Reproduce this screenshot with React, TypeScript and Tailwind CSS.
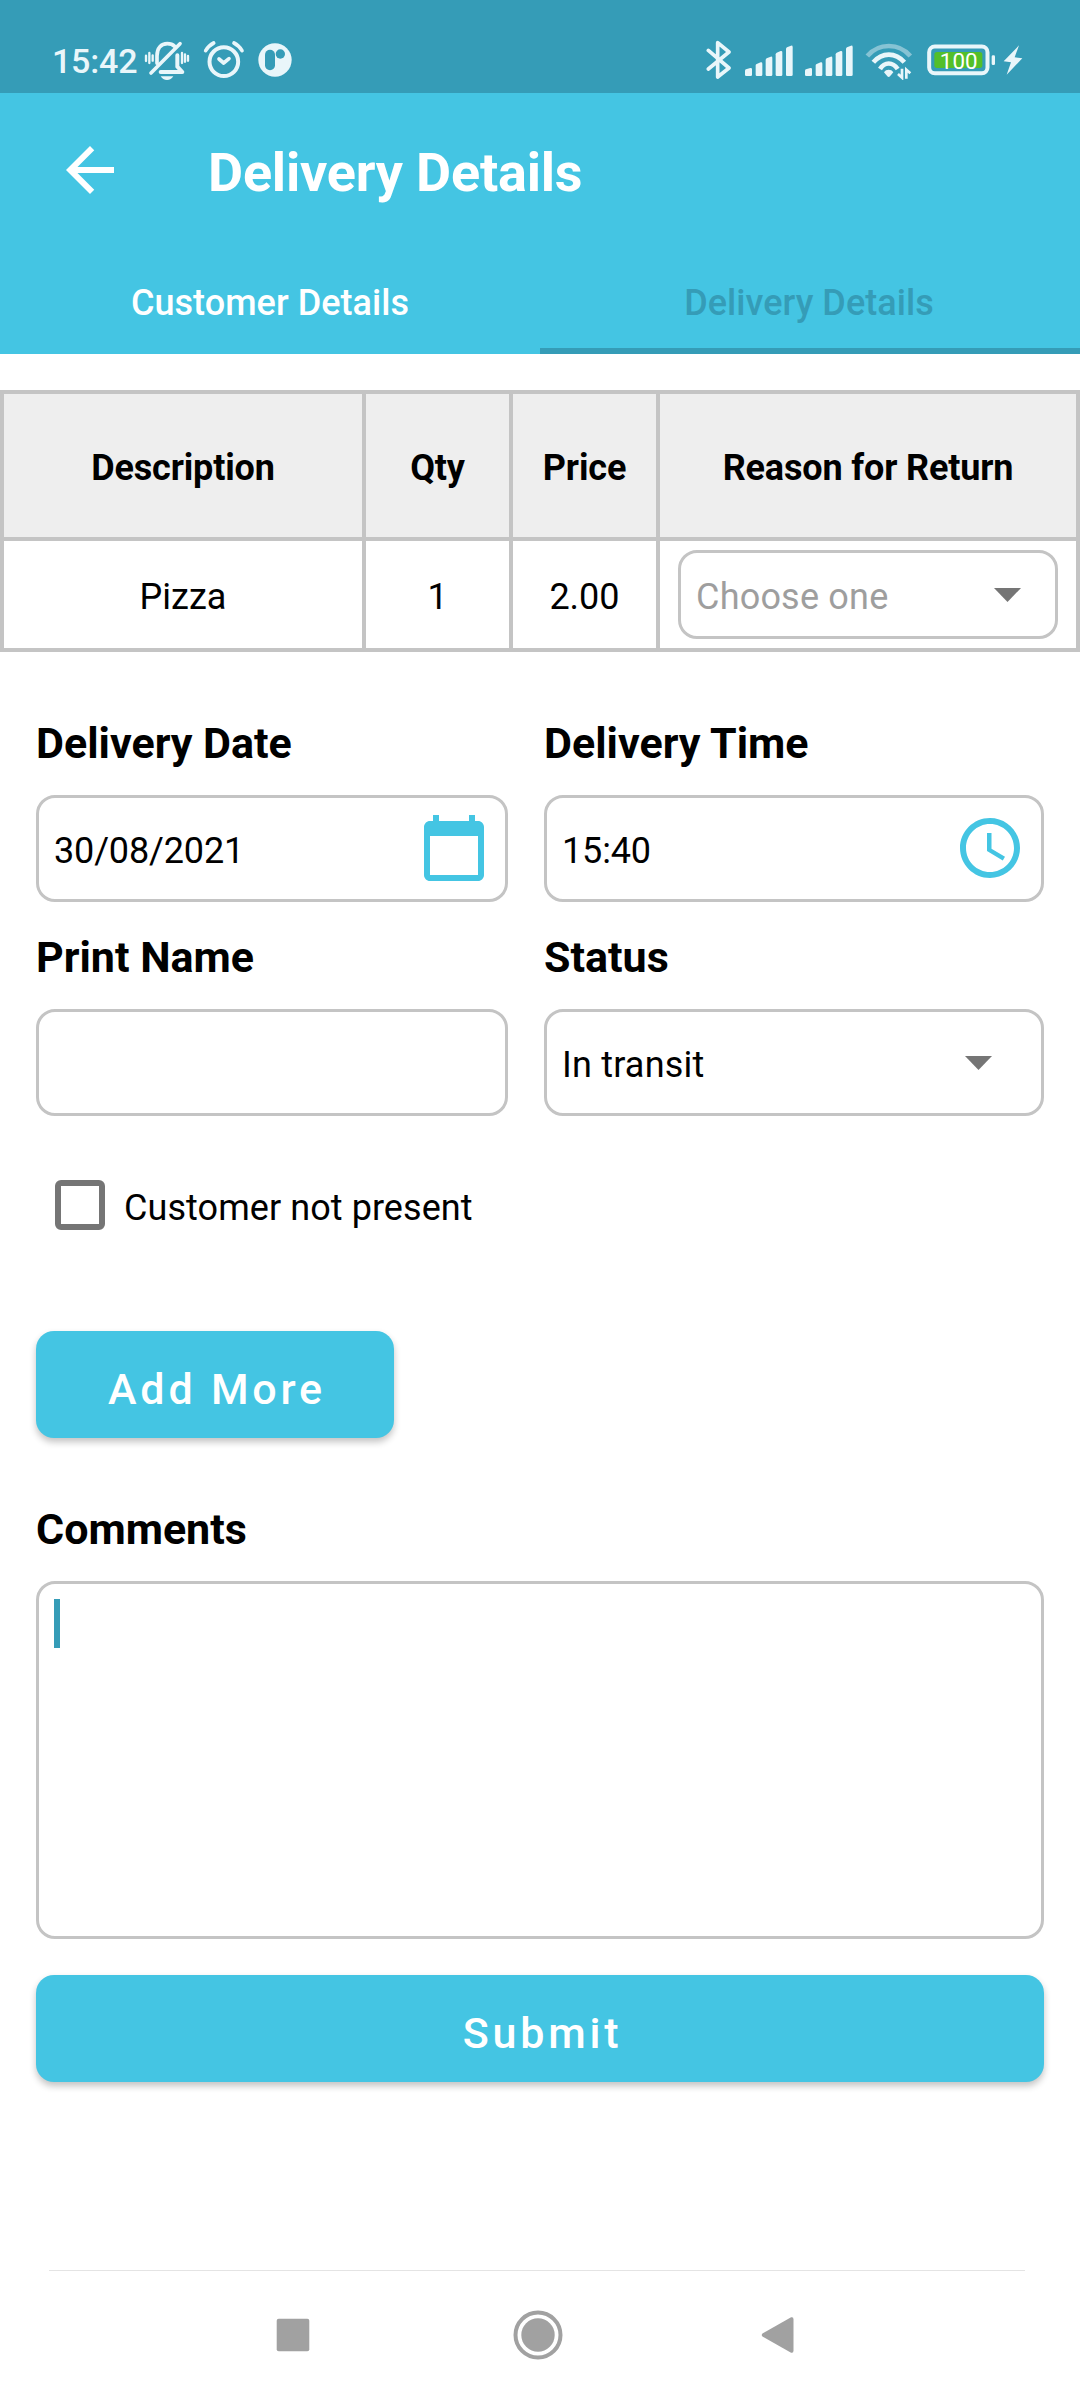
import { useState } from "react";

const tabs = ["Customer Details", "Delivery Details"];

const items = [{ description: "Pizza", qty: "1", price: "2.00" }];

const MutedBellIcon = () => (
  <svg className="w-[46px] h-[40px]" viewBox="432 120 138 120" fill="none" stroke="#e9f6fa" strokeLinecap="round">
    <path d="M471 190V168C471 143 484 131 502 131C512 131 519 134 524 139" strokeWidth="11" />
    <path d="M453 219L540 131" strokeWidth="11" />
    <path d="M482 216H547L532 200V166" strokeWidth="12" strokeLinejoin="round" />
    <path d="M438 167V183M448 159V189M458 166V182M546 159V189M555 163V185M564 168V182" strokeWidth="7" />
    <path d="M482 229H520C516 236 509 240 501 240C493 240 486 236 482 229Z" fill="#e9f6fa" stroke="none" />
  </svg>
);

const AlarmIcon = () => (
  <svg className="w-[42px] h-[40px]" viewBox="608 120 126 120" fill="none" stroke="#e9f6fa" strokeLinecap="round">
    <circle cx="670.5" cy="185" r="43" strokeWidth="12" />
    <path d="M616 152C622 142 630 134 640 129M725 152C719 142 711 134 701 129" strokeWidth="11" />
    <path d="M656 177L670 189L686 176" strokeWidth="11" strokeLinejoin="round" />
  </svg>
);

const AppIcon = () => (
  <svg className="w-[36px] h-[36px]" viewBox="771 126 108 108">
    <circle cx="825" cy="180" r="50" fill="#e9f6fa" />
    <rect x="795" y="149" width="30" height="62" rx="15" fill="#359cb7" />
    <circle cx="841" cy="162" r="14" fill="#359cb7" />
  </svg>
);

const BluetoothIcon = () => (
  <svg className="w-[26px] h-[40px]" viewBox="79 120 78 120" fill="none" stroke="#e9f6fa" strokeWidth="11" strokeLinecap="round" strokeLinejoin="round">
    <path d="M86 151L148 204L114 231V128L148 156L86 207" />
  </svg>
);

const SignalIcon = () => (
  <svg className="w-[50px] h-[32px]" viewBox="193 135 150 96" fill="#e9f6fa">
    <path d="M196 224V212Q196 209 199 208L212 204Q217 203 217 208V224Q217 228 213 228H200Q196 228 196 224Z" />
    <path d="M228 224V196Q228 193 231 192L243 187Q248 186 248 191V224Q248 228 244 228H232Q228 228 228 224Z" />
    <path d="M258 224V180Q258 177 261 175L273 170Q278 169 278 174V224Q278 228 274 228H262Q258 228 258 224Z" />
    <path d="M288 224V163Q288 160 291 158L303 153Q308 152 308 157V224Q308 228 304 228H292Q288 228 288 224Z" />
    <path d="M319 224V147Q319 144 322 142L334 137Q339 136 339 141V224Q339 228 335 228H323Q319 228 319 224Z" />
  </svg>
);

const WifiIcon = () => (
  <svg className="w-[48px] h-[38px]" viewBox="555 126 144 114" fill="none" stroke="#e9f6fa" strokeWidth="14">
    <path d="M562 168C596 128 657 128 691 168" stroke="#86c3d4" />
    <path d="M580 187C606 156 647 156 673 187" />
    <path d="M600 207C614 185 638 185 653 207" />
    <path d="M612 217C618 207 634 207 640 217L630 229Q626 233 622 229Z" fill="#e9f6fa" stroke="none" />
    <path d="M666 206V233L654 222M679 236V209L691 220" strokeWidth="8" />
  </svg>
);

const BatteryIcon = () => (
  <svg className="w-[70px] h-[32px]" viewBox="740 132 210 96">
    <rect x="746.5" y="139.5" width="175" height="80" rx="17" fill="none" stroke="#e9f6fa" strokeWidth="12" />
    <rect x="762" y="156" width="144" height="48" rx="8" fill="#53bf2a" />
    <rect x="934" y="166" width="10" height="29" rx="4" fill="#e9f6fa" />
    <text x="835" y="207" textAnchor="middle" fontSize="67" fill="#ffffff">
      100
    </text>
  </svg>
);

const BoltIcon = () => (
  <svg className="w-[20px] h-[32px]" viewBox="968 134 60 96" fill="#e9f6fa">
    <path d="M1016 138L970 186L992 189L979 226L1026 177L1003 174Z" />
  </svg>
);

const CalendarIcon = () => (
  <svg className="mb-0.5 size-[72px]" viewBox="0 0 24 24" fill="#44c5e3">
    <path d="M20 3h-1V1h-2v2H7V1H5v2H4c-1.1 0-2 .9-2 2v16c0 1.1.9 2 2 2h16c1.1 0 2-.9 2-2V5c0-1.1-.9-2-2-2zm0 18H4V8h16v13z" />
  </svg>
);

const ClockIcon = () => (
  <svg className="mb-0.5 size-[72px]" viewBox="0 0 24 24" fill="#44c5e3">
    <path d="M11.99 2C6.47 2 2 6.48 2 12s4.47 10 9.99 10C17.52 22 22 17.52 22 12S17.52 2 11.99 2zM12 20c-4.42 0-8-3.58-8-8s3.58-8 8-8 8 3.58 8 8-3.58 8-8 8z" />
    <path d="M12.5 7H11v6l5.25 3.15.75-1.23-4.5-2.67z" />
  </svg>
);

const DropdownArrow = () => (
  <svg className="w-[27px] h-[14px]" viewBox="0 0 27 14" fill="#757575">
    <path d="M0 0H27L13.5 14Z" />
  </svg>
);

function StatusBar() {
  return (
    <div className="flex h-[93px] items-center bg-[#359cb7] pl-[52px] pr-[57px] pt-[27px] text-[#e9f6fa]">
      <p className="w-[92px] pt-0.5 text-[34px] font-medium leading-none tracking-[-0.2px]">15:42</p>
      <MutedBellIcon />
      <div className="ml-[13px]">
        <AlarmIcon />
      </div>
      <div className="ml-[12px]">
        <AppIcon />
      </div>
      <div className="ml-auto flex items-center">
        <BluetoothIcon />
        <div className="ml-[12px] mt-[2px] flex gap-[10px]">
          <SignalIcon />
          <SignalIcon />
        </div>
        <div className="ml-[11px] mt-[2px]">
          <WifiIcon />
        </div>
        <div className="ml-[14px]">
          <BatteryIcon />
        </div>
        <div className="ml-[6px]">
          <BoltIcon />
        </div>
      </div>
    </div>
  );
}

export default function App() {
  const [currentTab, setCurrentTab] = useState(1);
  const [notPresent, setNotPresent] = useState(false);
  const [printName, setPrintName] = useState("");

  return (
    <div className="flex h-[2400px] w-[1080px] flex-col bg-white font-[Roboto,sans-serif] text-black">
      <StatusBar />
      <header className="bg-[#44c5e3] text-white">
        <div className="flex h-[158px] items-center pl-[54px]">
          <svg className="mb-1 size-[72px]" viewBox="0 0 24 24" fill="currentColor">
            <path d="M20 11H7.83l5.59-5.59L12 4l-8 8 8 8 1.41-1.41L7.83 13H20v-2z" />
          </svg>
          <h1 className="ml-[82px] pt-0.5 text-[54px] font-bold leading-none tracking-[-0.2px]">Delivery Details</h1>
        </div>
        <div className="grid h-[103px] grid-cols-2">
          {tabs.map((tab, index) => (
            <button
              key={tab}
              onClick={() => setCurrentTab(index)}
              className={`border-b-6 pt-1.5 text-[36px] font-medium leading-none tracking-[0.05px] ${
                index === currentTab ? "border-[#359cb7] pr-[2px] text-[#359cb7]" : "border-transparent"
              }`}
            >
              {tab}
            </button>
          ))}
        </div>
      </header>

      <div className="mt-9 grid grid-cols-[358px_143px_143px_416px] gap-1 bg-[#c4c4c4] p-1 text-center text-[36px] leading-none">
        {["Description", "Qty", "Price", "Reason for Return"].map((title) => (
          <div
            key={title}
            className="flex h-[143px] items-center justify-center bg-[#eeeeee] pt-1 font-bold tracking-[-0.15px]"
          >
            {title}
          </div>
        ))}
        {items.map((item) => (
          <div key={item.description} className="contents">
            <div className="flex h-[107px] items-center justify-center bg-white pt-1">{item.description}</div>
            <div className="flex items-center justify-center bg-white pt-1">{item.qty}</div>
            <div className="flex items-center justify-center bg-white pt-1">{item.price}</div>
            <div className="bg-white py-[9px] pl-[18px] pr-[18px]">
              <div className="flex h-[89px] items-center justify-between rounded-[19px] border-3 border-[#c4c4c4] pl-[15px] pr-[34px]">
                <span className="pt-1 tracking-[0.2px] text-[#9e9e9e]">Choose one</span>
                <DropdownArrow />
              </div>
            </div>
          </div>
        ))}
      </div>

      <main className="mt-10 flex flex-col px-9">
        <div className="grid grid-cols-[472px_500px] gap-x-9 gap-y-1 text-[36px] leading-none">
          <div>
            <p className="flex h-[103px] items-center text-[43px] font-bold">Delivery Date</p>
            <div className="flex h-[107px] items-center justify-between rounded-[19px] border-3 border-[#c4c4c4] pl-[15px] pr-[15px]">
              <span className="pt-1 tracking-[-0.15px]">30/08/2021</span>
              <CalendarIcon />
            </div>
          </div>
          <div>
            <p className="flex h-[103px] items-center text-[43px] font-bold">Delivery Time</p>
            <div className="flex h-[107px] items-center justify-between rounded-[19px] border-3 border-[#c4c4c4] pl-[15px] pr-[15px]">
              <span className="pt-1 tracking-[-0.15px]">15:40</span>
              <ClockIcon />
            </div>
          </div>
          <div>
            <p className="flex h-[103px] items-center text-[43px] font-bold">Print Name</p>
            <input
              className="block h-[107px] w-full rounded-[19px] border-3 border-[#c4c4c4] px-[15px] outline-none"
              value={printName}
              onChange={(e) => setPrintName(e.target.value)}
            />
          </div>
          <div>
            <p className="flex h-[103px] items-center text-[43px] font-bold">Status</p>
            <div className="flex h-[107px] items-center justify-between rounded-[19px] border-3 border-[#c4c4c4] pl-[15px] pr-[49px]">
              <span className="pt-1 tracking-[0.2px]">In transit</span>
              <DropdownArrow />
            </div>
          </div>
        </div>

        <div
          className="mt-16 flex h-[50px] items-center gap-[19px] pl-[19px]"
          onClick={() => setNotPresent(!notPresent)}
        >
          <div className={`size-[50px] rounded-[6px] border-6 border-[#757575] ${notPresent ? "bg-[#757575]" : ""}`}></div>
          <span className="pt-[5px] text-[36px] leading-none tracking-[0.07px]">Customer not present</span>
        </div>

        <button className="mt-[101px] h-[107px] w-[358px] rounded-[18px] bg-[#44c5e3] pl-1 pt-[10px] text-[43px] font-medium leading-none tracking-[3.8px] text-white shadow-[0_4px_7px_rgba(0,0,0,0.24)]">
          Add More
        </button>

        <p className="mt-10 flex h-[103px] items-center text-[43px] font-bold leading-none">Comments</p>
        <div className="h-[358px] rounded-[19px] border-3 border-[#c4c4c4] p-[15px]">
          <div className="h-[49px] w-[6px] bg-[#359cb7]"></div>
        </div>

        <button className="mt-9 h-[107px] rounded-[18px] bg-[#44c5e3] pl-[5px] pt-[10px] text-[43px] font-medium leading-none tracking-[3.8px] text-white shadow-[0_4px_7px_rgba(0,0,0,0.24)]">
          Submit
        </button>
      </main>

      <nav className="mt-auto h-[130px]">
        <div className="ml-[49px] mr-[55px] h-px bg-[#e4e4e4]"></div>
        <div className="flex h-[128px] items-center pl-[276px]">
          <svg className="size-[34px]" viewBox="0 0 34 34" fill="#a1a1a1">
            <rect x="0.7" y="0.7" width="32.6" height="32.6" rx="2" />
          </svg>
          <svg className="ml-[203px] size-[50px]" viewBox="0 0 50 50" fill="#a1a1a1">
            <circle cx="25" cy="25" r="22.5" fill="none" stroke="#a1a1a1" strokeWidth="4" />
            <circle cx="25" cy="25" r="16.7" />
          </svg>
          <svg className="ml-[198px] h-[38px] w-[33px]" viewBox="0 0 34 38" fill="#a1a1a1">
            <path d="M1.5 17.5L31 .8Q33.5 0 33.5 3V35Q33.5 38 31 37.2L1.5 20.5Q0 19 1.5 17.5Z" />
          </svg>
        </div>
      </nav>
    </div>
  );
}
